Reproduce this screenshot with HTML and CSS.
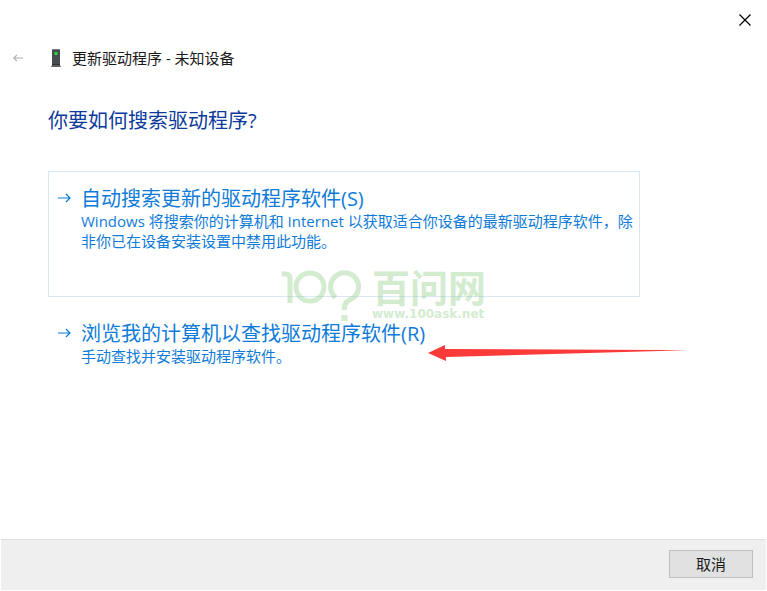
FILE: index.html
```html
<!DOCTYPE html>
<html lang="zh-CN">
<head>
  <meta charset="UTF-8">
  <meta name="viewport" content="width=device-width, initial-scale=1.0">
  <title>更新驱动程序 - 未知设备</title>
  <link rel="stylesheet" href="styles.css">
</head>
<body>
  <div class="dialog">
    <div class="titlebar">
      <button class="close" aria-label="关闭">
        <svg width="12" height="12" viewBox="0 0 12 12"><path d="M0.5 0.5 L11.5 11.5 M11.5 0.5 L0.5 11.5" /></svg>
      </button>
    </div>

    <header class="header">
      <button class="back" aria-label="返回" disabled>
        <svg width="10" height="8" viewBox="0 0 10 8"><path d="M10 4 H1 M4 0.8 L0.8 4 L4 7.2" /></svg>
      </button>
      <svg class="device" width="10" height="18" viewBox="0 0 10 18">
        <rect x="1" y="0" width="8" height="16" fill="#4a4d50" />
        <rect x="1" y="0" width="8" height="1" fill="#77797b" />
        <rect x="3.5" y="3" width="3" height="3" fill="#22dd35" />
        <path d="M1 16 H9 L10 18 H0 Z" fill="#5d6063" />
        <rect x="1" y="15" width="8" height="1" fill="#303234" />
      </svg>
      <span class="caption">更新驱动程序 - 未知设备</span>
    </header>

    <main class="content">
      <h1>你要如何搜索驱动程序?</h1>

      <button class="option selected">
        <svg class="arrow" width="13" height="10" viewBox="0 0 13 10"><path d="M0 5 H12 M8 1 L12 5 L8 9" /></svg>
        <span class="option-text">
          <span class="option-title">自动搜索更新的驱动程序软件(S)</span>
          <span class="option-note">Windows 将搜索你的计算机和 Internet 以获取适合你设备的最新驱动程序软件，除非你已在设备安装设置中禁用此功能。</span>
        </span>
      </button>

      <button class="option">
        <svg class="arrow" width="13" height="10" viewBox="0 0 13 10"><path d="M0 5 H12 M8 1 L12 5 L8 9" /></svg>
        <span class="option-text">
          <span class="option-title">浏览我的计算机以查找驱动程序软件(R)</span>
          <span class="option-note">手动查找并安装驱动程序软件。</span>
        </span>
        <svg class="pointer" width="260" height="18" viewBox="0 0 260 18"><path d="M0 9 L17 1 V5 L232 6 L260 6.5 L232 7 L18 13 V17 Z" /></svg>
      </button>
    </main>

    <footer class="footer">
      <button class="cancel">取消</button>
    </footer>

    <div class="watermark">
      <svg width="80" height="52" viewBox="0 0 80 52">
        <path d="M0 4 H4 Q8.5 4 8.5 9 V33" />
        <circle cx="28.5" cy="17" r="14" />
        <path d="M54 27.5 A14 14 0 1 1 71.5 28 C66 31 63 32 63 38 V40" />
        <rect x="60" y="45" width="6" height="6" />
      </svg>
      <div class="watermark-text">
        <span class="watermark-name">百问网</span>
        <span class="watermark-url">www.100ask.net</span>
      </div>
    </div>
  </div>
</body>
</html>
```

FILE: styles.css
```css
* {
  box-sizing: border-box;
}

body {
  margin: 0;
  font-family: "Open Sans", "Noto Sans CJK SC", sans-serif;
  font-size: 15px;
  line-height: 20px;
  color: #1a1a1a;
  background-color: #fff;
}

button {
  margin: 0;
  padding: 0;
  border: none;
  background: none;
  font: inherit;
  color: inherit;
}

svg {
  display: block;
  flex: none;
}

.dialog {
  position: relative;
  display: flex;
  flex-direction: column;
  min-height: 100vh;
  padding: 0 1px 1px;
}

.titlebar {
  display: flex;
  justify-content: flex-end;
}

.close {
  padding: 14px 15px;
}

.close path {
  stroke: #000;
  stroke-width: 1.2;
}

.header {
  display: flex;
  align-items: center;
  padding: 8px 12px;
}

.back path {
  fill: none;
  stroke: #b0b0b0;
  stroke-width: 1.2;
}

.device {
  margin: 0 11px 0 28px;
}

.content {
  flex: 1;
  padding: 30px 126px 24px 47px;
}

h1 {
  margin: 0 0 35px;
  font-size: 20px;
  font-weight: 400;
  line-height: 30px;
  color: #0c3a9c;
}

.option {
  position: relative;
  display: flex;
  gap: 10px;
  width: 100%;
  padding: 15px 4px 8px 9px;
  border: 1px solid transparent;
  text-align: left;
  color: #0f7bd8;
}

.option.selected {
  min-height: 126px;
  margin-bottom: 9px;
  border-color: #d9e8f5;
}

.arrow {
  margin-top: 6px;
}

.arrow path {
  fill: none;
  stroke: #0f7bd8;
  stroke-width: 1.2;
}

.option-title,
.option-note {
  display: block;
}

.option-title {
  font-size: 20px;
  line-height: 24px;
}

.pointer {
  position: absolute;
  left: 379px;
  top: 37px;
}

.pointer path {
  fill: #fb3a3a;
}

.footer {
  display: flex;
  justify-content: flex-end;
  padding: 10px 13px 12px;
  border-top: 1px solid #dfdfdf;
  background-color: #efefef;
}

.cancel {
  width: 84px;
  height: 28px;
  border: 1px solid #bfbfbf;
  background-color: #e1e1e1;
}

.watermark {
  position: absolute;
  top: 50%;
  left: 50%;
  display: flex;
  gap: 11px;
  transform: translate(-50%, -50%);
  color: #78c26c;
  opacity: 0.32;
  pointer-events: none;
}

.watermark path,
.watermark circle {
  fill: none;
  stroke: currentColor;
  stroke-width: 5;
}

.watermark rect {
  fill: currentColor;
}

.watermark-text {
  display: flex;
  flex-direction: column;
  gap: 4px;
  font-weight: 700;
}

.watermark-name {
  font-size: 38px;
  line-height: 34px;
}

.watermark-url {
  font-family: "DejaVu Sans", sans-serif;
  font-size: 12px;
  line-height: 12px;
}
```
